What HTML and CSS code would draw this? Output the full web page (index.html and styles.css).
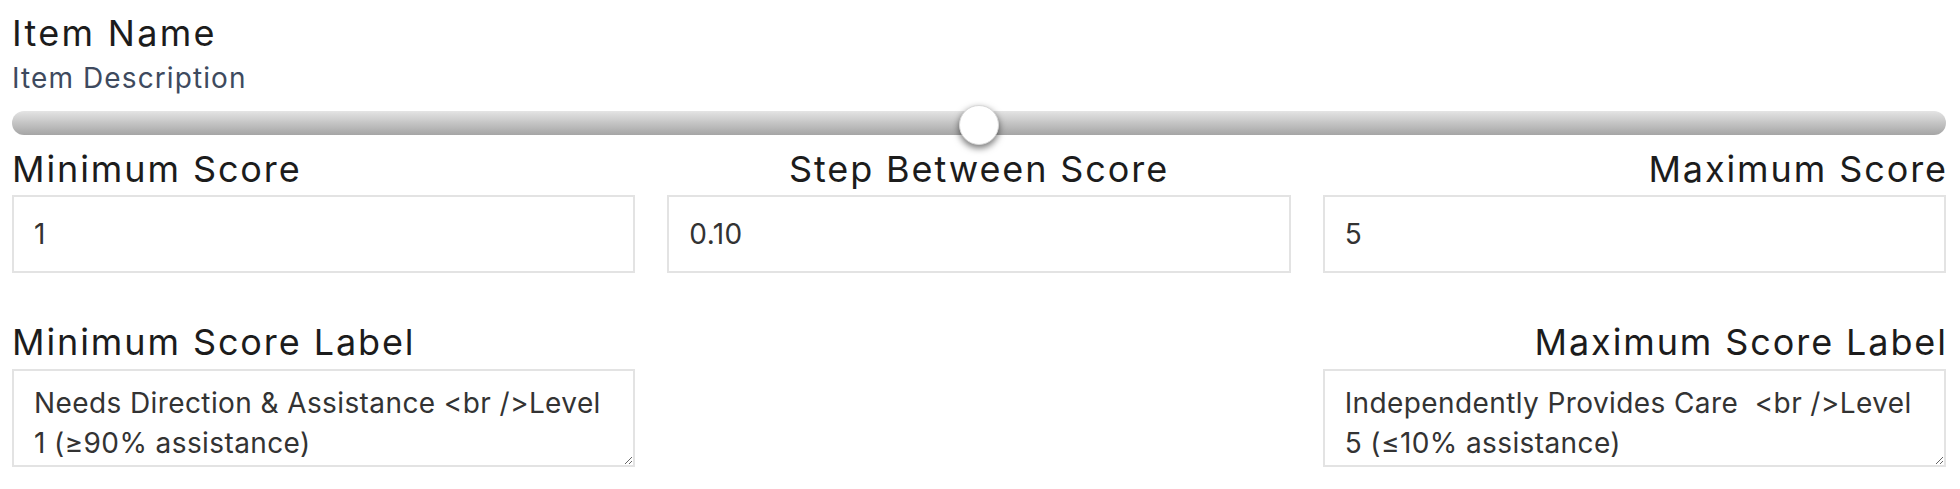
FILE: index.html
```html
<!DOCTYPE html>
<html lang="en">
<head>
<meta charset="utf-8">
<title>Item</title>
<link rel="stylesheet" href="styles.css">
</head>
<body>
<div class="item">
  <h1 class="item-name">Item Name</h1>
  <p class="item-desc">Item Description</p>
  <input class="slider" type="range" min="1" max="5" step="0.1" value="3">
  <div class="row">
    <div class="field left">
      <label class="label">Minimum Score</label>
      <input class="box" type="text" value="1">
    </div>
    <div class="field center">
      <label class="label">Step Between Score</label>
      <input class="box" type="text" value="0.10">
    </div>
    <div class="field right">
      <label class="label">Maximum Score</label>
      <input class="box" type="text" value="5">
    </div>
  </div>
  <div class="row row2">
    <div class="field left">
      <label class="label">Minimum Score Label</label>
      <textarea class="area">Needs Direction &amp; Assistance &lt;br /&gt;Level
1 (≥90% assistance)</textarea>
    </div>
    <div class="field"></div>
    <div class="field right">
      <label class="label">Maximum Score Label</label>
      <textarea class="area">Independently Provides Care  &lt;br /&gt;Level
5 (≤10% assistance)</textarea>
    </div>
  </div>
</div>
</body>
</html>
```
FILE: styles.css
```css
html, body {
  margin: 0;
  padding: 0;
  background: #ffffff;
}
body {
  padding: 0 14px 0 12px;
  font-family: "Inter", "DejaVu Sans", sans-serif;
  color: #1c1c1c;
}
.item-name {
  margin: 11px 0 0;
  font-size: 36px;
  line-height: 44px;
  font-weight: 400;
  letter-spacing: 2.3px;
}
.item-desc {
  margin: 5px 0 0;
  font-size: 28px;
  line-height: 36px;
  font-weight: 400;
  letter-spacing: 1.1px;
  color: #3e4a5e;
}
.slider {
  -webkit-appearance: none;
  appearance: none;
  display: block;
  width: 100%;
  height: 40px;
  margin: 7px 0 0;
  padding: 0;
  background: transparent;
}
.slider::-webkit-slider-runnable-track {
  height: 24px;
  border-radius: 12px;
  background: linear-gradient(#e4e4e4, #a5a5a5);
}
.slider::-webkit-slider-thumb {
  -webkit-appearance: none;
  appearance: none;
  width: 40px;
  height: 40px;
  margin-top: -6px;
  border-radius: 50%;
  background: #ffffff;
  border: 1px solid #d8d8d8;
  box-sizing: border-box;
  box-shadow: 0 3px 7px rgba(0, 0, 0, 0.55);
}
.row {
  display: grid;
  grid-template-columns: 1fr 1fr 1fr;
  column-gap: 32px;
  margin-top: 4px;
}
.row2 {
  margin-top: 47px;
}
.field {
  display: flex;
  flex-direction: column;
}
.left { text-align: left; }
.center { text-align: center; }
.right { text-align: right; }
.label {
  display: block;
  font-size: 36px;
  line-height: 44px;
  font-weight: 400;
  letter-spacing: 1.9px;
  margin-bottom: 4px;
}
.right .label {
  margin-right: -1.9px;
}
.row2 .label {
  margin-bottom: 5px;
}
.box {
  display: block;
  box-sizing: border-box;
  width: 100%;
  height: 78px;
  margin: 0;
  padding: 0 20px;
  border: 2px solid #e3e3e3;
  border-radius: 0;
  outline: none;
  font-family: inherit;
  font-size: 28px;
  letter-spacing: 0.4px;
  color: #333333;
  background: #ffffff;
}
.area {
  display: block;
  box-sizing: border-box;
  width: 100%;
  height: 98px;
  margin: 0;
  padding: 12px 20px 0;
  border: 2px solid #e3e3e3;
  border-radius: 0;
  outline: none;
  font-family: inherit;
  font-size: 28px;
  line-height: 40px;
  letter-spacing: 0.4px;
  color: #333333;
  background: #ffffff;
  overflow: hidden;
  resize: vertical;
}
```
